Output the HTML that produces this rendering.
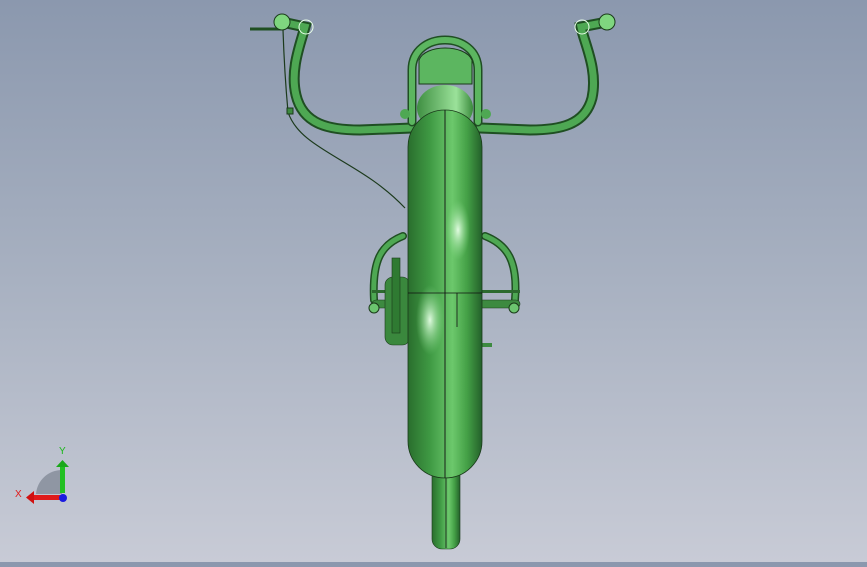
<!DOCTYPE html>
<html><head><style>
html,body{margin:0;padding:0}
body{width:867px;height:562px;overflow:hidden;background:linear-gradient(#8b98ae 0%,#a8b1c1 50%,#c8cbd6 100%);font-family:"Liberation Sans",sans-serif}
</style></head><body>
<svg width="867" height="562" viewBox="0 0 867 562" xmlns="http://www.w3.org/2000/svg">
<defs>
<linearGradient id="tire" x1="0" x2="1" y1="0" y2="0">
<stop offset="0" stop-color="#2a6e2d"/><stop offset="0.3" stop-color="#3f9a44"/><stop offset="0.6" stop-color="#6cc86c"/><stop offset="0.8" stop-color="#44a046"/><stop offset="1" stop-color="#23602a"/>
</linearGradient>
<radialGradient id="hl1" cx="0.5" cy="0.5" r="0.5"><stop offset="0" stop-color="#e8ffe8" stop-opacity="0.95"/><stop offset="1" stop-color="#8fe08f" stop-opacity="0"/></radialGradient>
<linearGradient id="dome" x1="0" x2="1"><stop offset="0" stop-color="#3f8f42"/><stop offset="0.7" stop-color="#9be29a"/><stop offset="1" stop-color="#3a8a3c"/></linearGradient>
</defs>
<path d="M283 30 C284 60 286 90 288 112 C300 150 360 160 405 208" fill="none" stroke="#1c3a1c" stroke-width="1.2"/>
<g fill="none" stroke-linecap="round">
<path d="M282 22 L305 27 C300 45 290 70 296 95 C303 125 330 130 360 130 L412 128" stroke="#1f4f22" stroke-width="11"/>
<path d="M282 22 L305 27 C300 45 290 70 296 95 C303 125 330 130 360 130 L412 128" stroke="#4ea853" stroke-width="7"/>
<path d="M607 22 L581 27 C585 45 598 70 592 98 C585 125 560 130 530 130 L480 128" stroke="#1f4f22" stroke-width="11"/>
<path d="M607 22 L581 27 C585 45 598 70 592 98 C585 125 560 130 530 130 L480 128" stroke="#4ea853" stroke-width="7"/>
<path d="M412 122 L412 70 C412 30 478 30 478 70 L478 122" stroke="#1f4f22" stroke-width="9"/>
<path d="M412 122 L412 70 C412 30 478 30 478 70 L478 122" stroke="#5cb660" stroke-width="6"/>
<path d="M403 236 C380 245 372 262 374 300" stroke="#1f4f22" stroke-width="8"/>
<path d="M403 236 C380 245 372 262 374 300" stroke="#4ea853" stroke-width="5"/>
<path d="M485 236 C508 245 518 262 515 300" stroke="#1f4f22" stroke-width="8"/>
<path d="M485 236 C508 245 518 262 515 300" stroke="#4ea853" stroke-width="5"/>
</g>
<line x1="250" y1="29" x2="282" y2="29" stroke="#1f4f22" stroke-width="3"/>
<circle cx="282" cy="22" r="8" fill="#7fd67f" stroke="#1a3a1a"/>
<circle cx="306" cy="27" r="7" fill="none" stroke="#e8ffe8"/>
<circle cx="607" cy="22" r="8" fill="#7fd67f" stroke="#1a3a1a"/>
<circle cx="582" cy="27" r="7" fill="none" stroke="#e8ffe8"/>
<rect x="287" y="108" width="6" height="6" fill="#3d8a40" stroke="#1a3a1a"/>
<path d="M419 84 L419 60 C425 44 465 44 472 60 L472 84 Z" fill="#5cb660" stroke="#1a3a1a"/>
<ellipse cx="405" cy="114" rx="5" ry="5" fill="#4ea853"/>
<ellipse cx="486" cy="114" rx="5" ry="5" fill="#4ea853"/>
<ellipse cx="445" cy="108" rx="28" ry="23" fill="url(#dome)"/>
<rect x="372" y="290" width="148" height="3" fill="#2c6a2e"/>
<rect x="372" y="300" width="148" height="8" rx="4" fill="#3d8a40" stroke="#1a3a1a" stroke-width="0.6"/>
<rect x="385" y="277" width="25" height="68" rx="8" fill="#3a883d" stroke="#1a3a1a" stroke-width="0.6"/>
<rect x="392" y="258" width="8" height="75" fill="#2f7a32" stroke="#1a3a1a" stroke-width="0.6"/>
<circle cx="374" cy="308" r="5" fill="#6cc56f" stroke="#1a3a1a"/>
<circle cx="514" cy="308" r="5" fill="#6cc56f" stroke="#1a3a1a"/>
<rect x="482" y="343" width="10" height="4" fill="#3d8a40"/>
<rect x="432" y="460" width="28" height="89" rx="10" fill="url(#tire)" stroke="#1a3a1a" stroke-width="0.6"/>
<line x1="446" y1="470" x2="446" y2="548" stroke="#111" stroke-width="0.8"/>
<rect x="408" y="110" width="74" height="368" rx="37" fill="url(#tire)" stroke="#1a3a1a" stroke-width="0.8"/>
<ellipse cx="458" cy="230" rx="12" ry="30" fill="url(#hl1)"/>
<ellipse cx="430" cy="320" rx="14" ry="35" fill="url(#hl1)"/>
<line x1="445" y1="110" x2="445" y2="478" stroke="#111" stroke-width="0.9"/>
<line x1="408" y1="293" x2="482" y2="293" stroke="#111" stroke-width="0.8"/>
<line x1="457" y1="293" x2="457" y2="327" stroke="#111" stroke-width="0.8"/>
<path d="M36 494 A26 26 0 0 1 62 470 L62 494 Z" fill="#8f96a3"/>
<rect x="60" y="465" width="5" height="28" fill="#22c022"/>
<polygon points="56,467 62.5,460 69,467" fill="#1aa81a"/>
<rect x="33" y="495" width="30" height="5" fill="#e01a1a"/>
<polygon points="34,491 26,497.5 34,504" fill="#d01010"/>
<circle cx="63" cy="498" r="4" fill="#1a1ae0"/>
<text x="59" y="454" font-size="10" fill="#1cb81c">Y</text>
<text x="15" y="497" font-size="10" fill="#e01a1a">X</text>
</svg>
</body></html>
